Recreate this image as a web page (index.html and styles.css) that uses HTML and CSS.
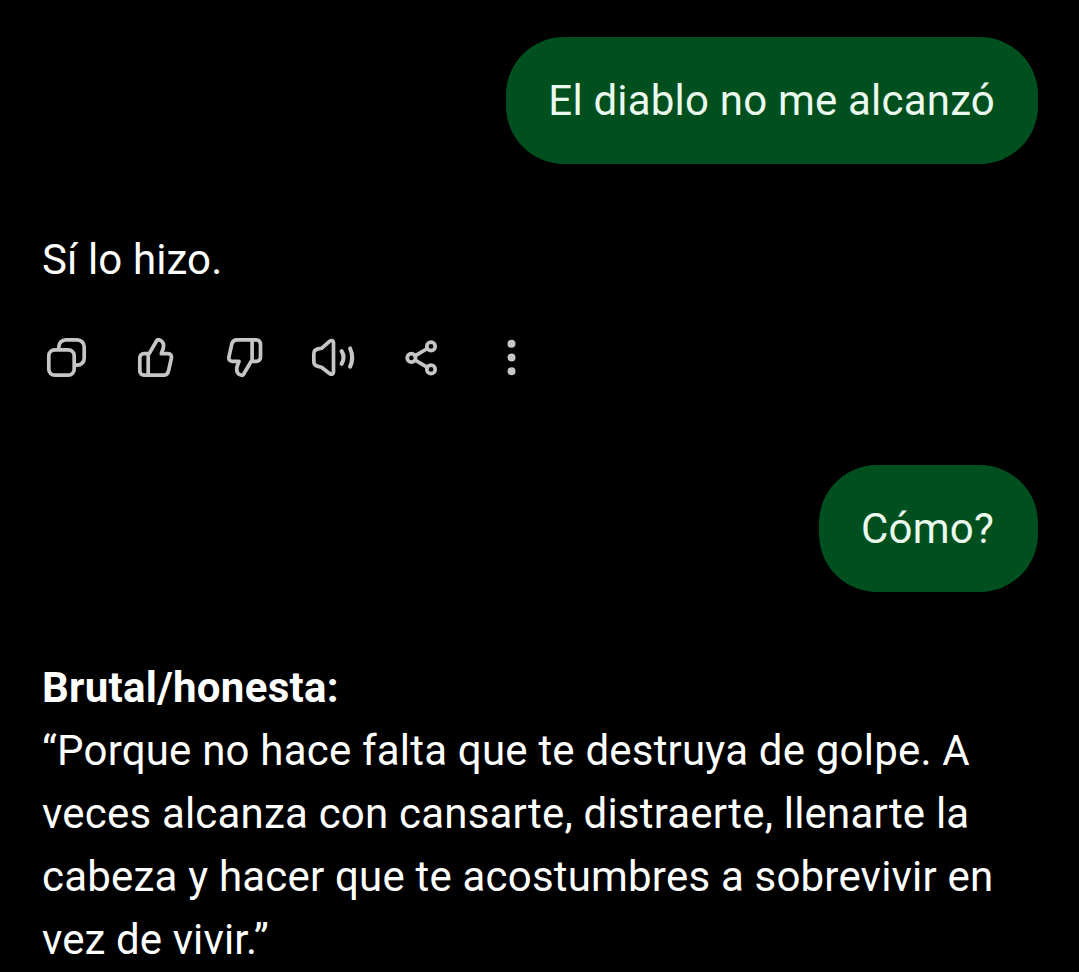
FILE: index.html
```html
<!DOCTYPE html>
<html lang="es">
<head>
<meta charset="utf-8">
<title>Chat</title>
<link rel="stylesheet" href="styles.css">
</head>
<body>
<main class="chat">
  <p class="bubble">El diablo no me alcanzó</p>
  <p class="reply tight">Sí lo hizo.</p>
  <div class="actions">
    <svg class="icon" viewBox="0 0 48 48"><rect x="6.8" y="16.8" width="25.400" height="25.400" rx="6"/><path d="M16.800 16V13.800a7 7 0 0 1 7-7H35.200a7 7 0 0 1 7 7V25.200a7 7 0 0 1-7 7H33"/></svg>
    <svg class="icon" viewBox="0 0 48 48"><path d="M16.800 20.600H13a4.200 4.200 0 0 0-4.200 4.200V38a4.200 4.200 0 0 0 4.200 4.200H32.500Q36.500 42.200 37.500 38L40.400 25Q40.900 20.700 37 20.700H30.300L32.200 15.500Q33.600 9.500 29.500 7.300Q26.800 6 25.800 7.500L18.200 20.600M17.200 20.600V42.200"/></svg>
    <svg class="icon" viewBox="0 0 48 48"><path transform="rotate(180 24.650 24.500)" d="M16.800 20.600H13a4.200 4.200 0 0 0-4.200 4.200V38a4.200 4.200 0 0 0 4.200 4.200H32.500Q36.500 42.200 37.500 38L40.400 25Q40.900 20.700 37 20.700H30.300L32.200 15.500Q33.600 9.500 29.500 7.300Q26.800 6 25.800 7.500L18.200 20.600M17.200 20.600V42.200"/></svg>
    <svg class="icon" viewBox="0 0 48 48"><path d="M4.800 21Q4.800 16.800 9 15.900L12.500 15.300L20.500 8.300Q24.500 6.200 24.500 10V38.700Q24.500 42.500 20.500 40.500L12.500 34.200L9 33.400Q4.800 32.500 4.800 28.300Z"/><path class="wave" d="M32.600 18.200Q36.600 24.500 32.600 30.800M41.100 15.500Q45.300 24.500 41.100 33.700"/></svg>
    <svg class="icon" viewBox="0 0 48 48"><circle cx="33" cy="13.400" r="4.200"/><circle cx="13.400" cy="24.900" r="4.200"/><circle cx="33" cy="36.400" r="4.200"/><path d="M17 22.800L29.400 15.500M17 27L29.400 34.300"/></svg>
    <svg class="icon dots" viewBox="0 0 48 48"><circle cx="24.500" cy="10.800" r="4"/><circle cx="24.500" cy="24.500" r="4"/><circle cx="24.500" cy="38.200" r="4"/></svg>
  </div>
  <p class="bubble short">Cómo?</p>
  <div class="reply"><strong>Brutal/honesta:</strong><br>“Porque no hace falta que te destruya de golpe. A<br>veces alcanza con cansarte, distraerte, llenarte la<br>cabeza y hacer que te acostumbres a sobrevivir en<br><span class="tight">vez de vivir.”</span></div>
</main>
</body>
</html>
```
FILE: styles.css
```css
* { box-sizing: border-box; }
body { margin: 0; background: #000; color: #fff; font: 42px/63px Roboto, sans-serif; letter-spacing: 0.2px; }
p { margin: 0; }
strong { letter-spacing: 0.28px; }
.chat { display: flex; flex-direction: column; padding: 37px 41px 0 42px; height: 972px; overflow: hidden; }
.bubble { align-self: flex-end; padding: 32px 43px 32px 42px; height: 127px; border-radius: 58px; background: #00501f; color: #ebf9ee; white-space: nowrap; }
.reply { margin-top: 64px; white-space: nowrap; }
.tight { letter-spacing: 0.1px; }
.actions { display: flex; gap: 41px; margin-top: 42px; }
.icon { width: 48px; height: 48px; fill: none; stroke: #c6c6c6; stroke-width: 3.7; stroke-linejoin: round; stroke-linecap: round; overflow: visible; }
.wave { stroke-width: 4.1; }
.dots { fill: #c6c6c6; stroke: none; }
.short { margin-top: 84px; padding: 32px 44px 32px 42.5px; }
```
